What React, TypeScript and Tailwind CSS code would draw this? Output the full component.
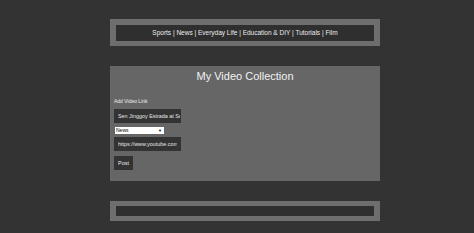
import React from "react";

const NAV = ["Sports", "News", "Everyday Life", "Education & DIY", "Tutorials", "Film"];

export default function App() {
  return (
    <div className="min-h-[233px] w-full bg-[#333333] pt-[19px] font-['Liberation_Sans',Arial,sans-serif] text-[#eeeeee]">
      <div className="ml-[110px] flex w-[270px] flex-col gap-[20px]">
        {/* nav */}
        <div className="bg-[#6e6e6e] px-[6px] pb-[5px] pt-[6px]">
          <div className="flex h-[16px] items-center justify-center bg-[#2f2f2f] text-[6.5px] text-[#ececec]">
            {NAV.join(" | ")}
          </div>
        </div>

        {/* main */}
        <div className="flex h-[115px] flex-col bg-[#666666] px-[4px]">
          <h1 className="mt-[4px] text-center text-[11px] leading-[13px] text-[#f2f2f2]">My Video Collection</h1>
          <div className="mt-[15px] text-[5px] leading-[6px]">Add Video Link</div>
          <input
            className="mt-[5px] h-[14px] w-[67px] bg-[#333333] pl-[4px] pr-[1px] text-[5.4px] text-[#e6e6e6] outline-none"
            defaultValue="Sen Jinggoy Estrada at Senator Bong Revilla"
          />
          <div className="relative ml-[1px] mt-[4px] flex h-[7px] w-[49px] items-center bg-white pl-[1px] text-[5px] text-black">
            News
            <span className="absolute right-[2px] top-[0.5px] text-[4px]">▼</span>
          </div>
          <input
            className="mt-[3px] h-[14px] w-[67px] bg-[#333333] px-[4px] text-[5.4px] text-[#e6e6e6] outline-none"
            defaultValue="https://www.youtube.com"
          />
          <button className="mt-[5px] flex h-[14px] w-[19px] items-center justify-center bg-[#333333] text-[5.5px] text-[#e6e6e6]">
            Post
          </button>
        </div>

        {/* footer */}
        <div className="bg-[#6e6e6e] px-[6px] py-[5px]">
          <div className="h-[10px] bg-[#2f2f2f]" />
        </div>
      </div>
    </div>
  );
}
